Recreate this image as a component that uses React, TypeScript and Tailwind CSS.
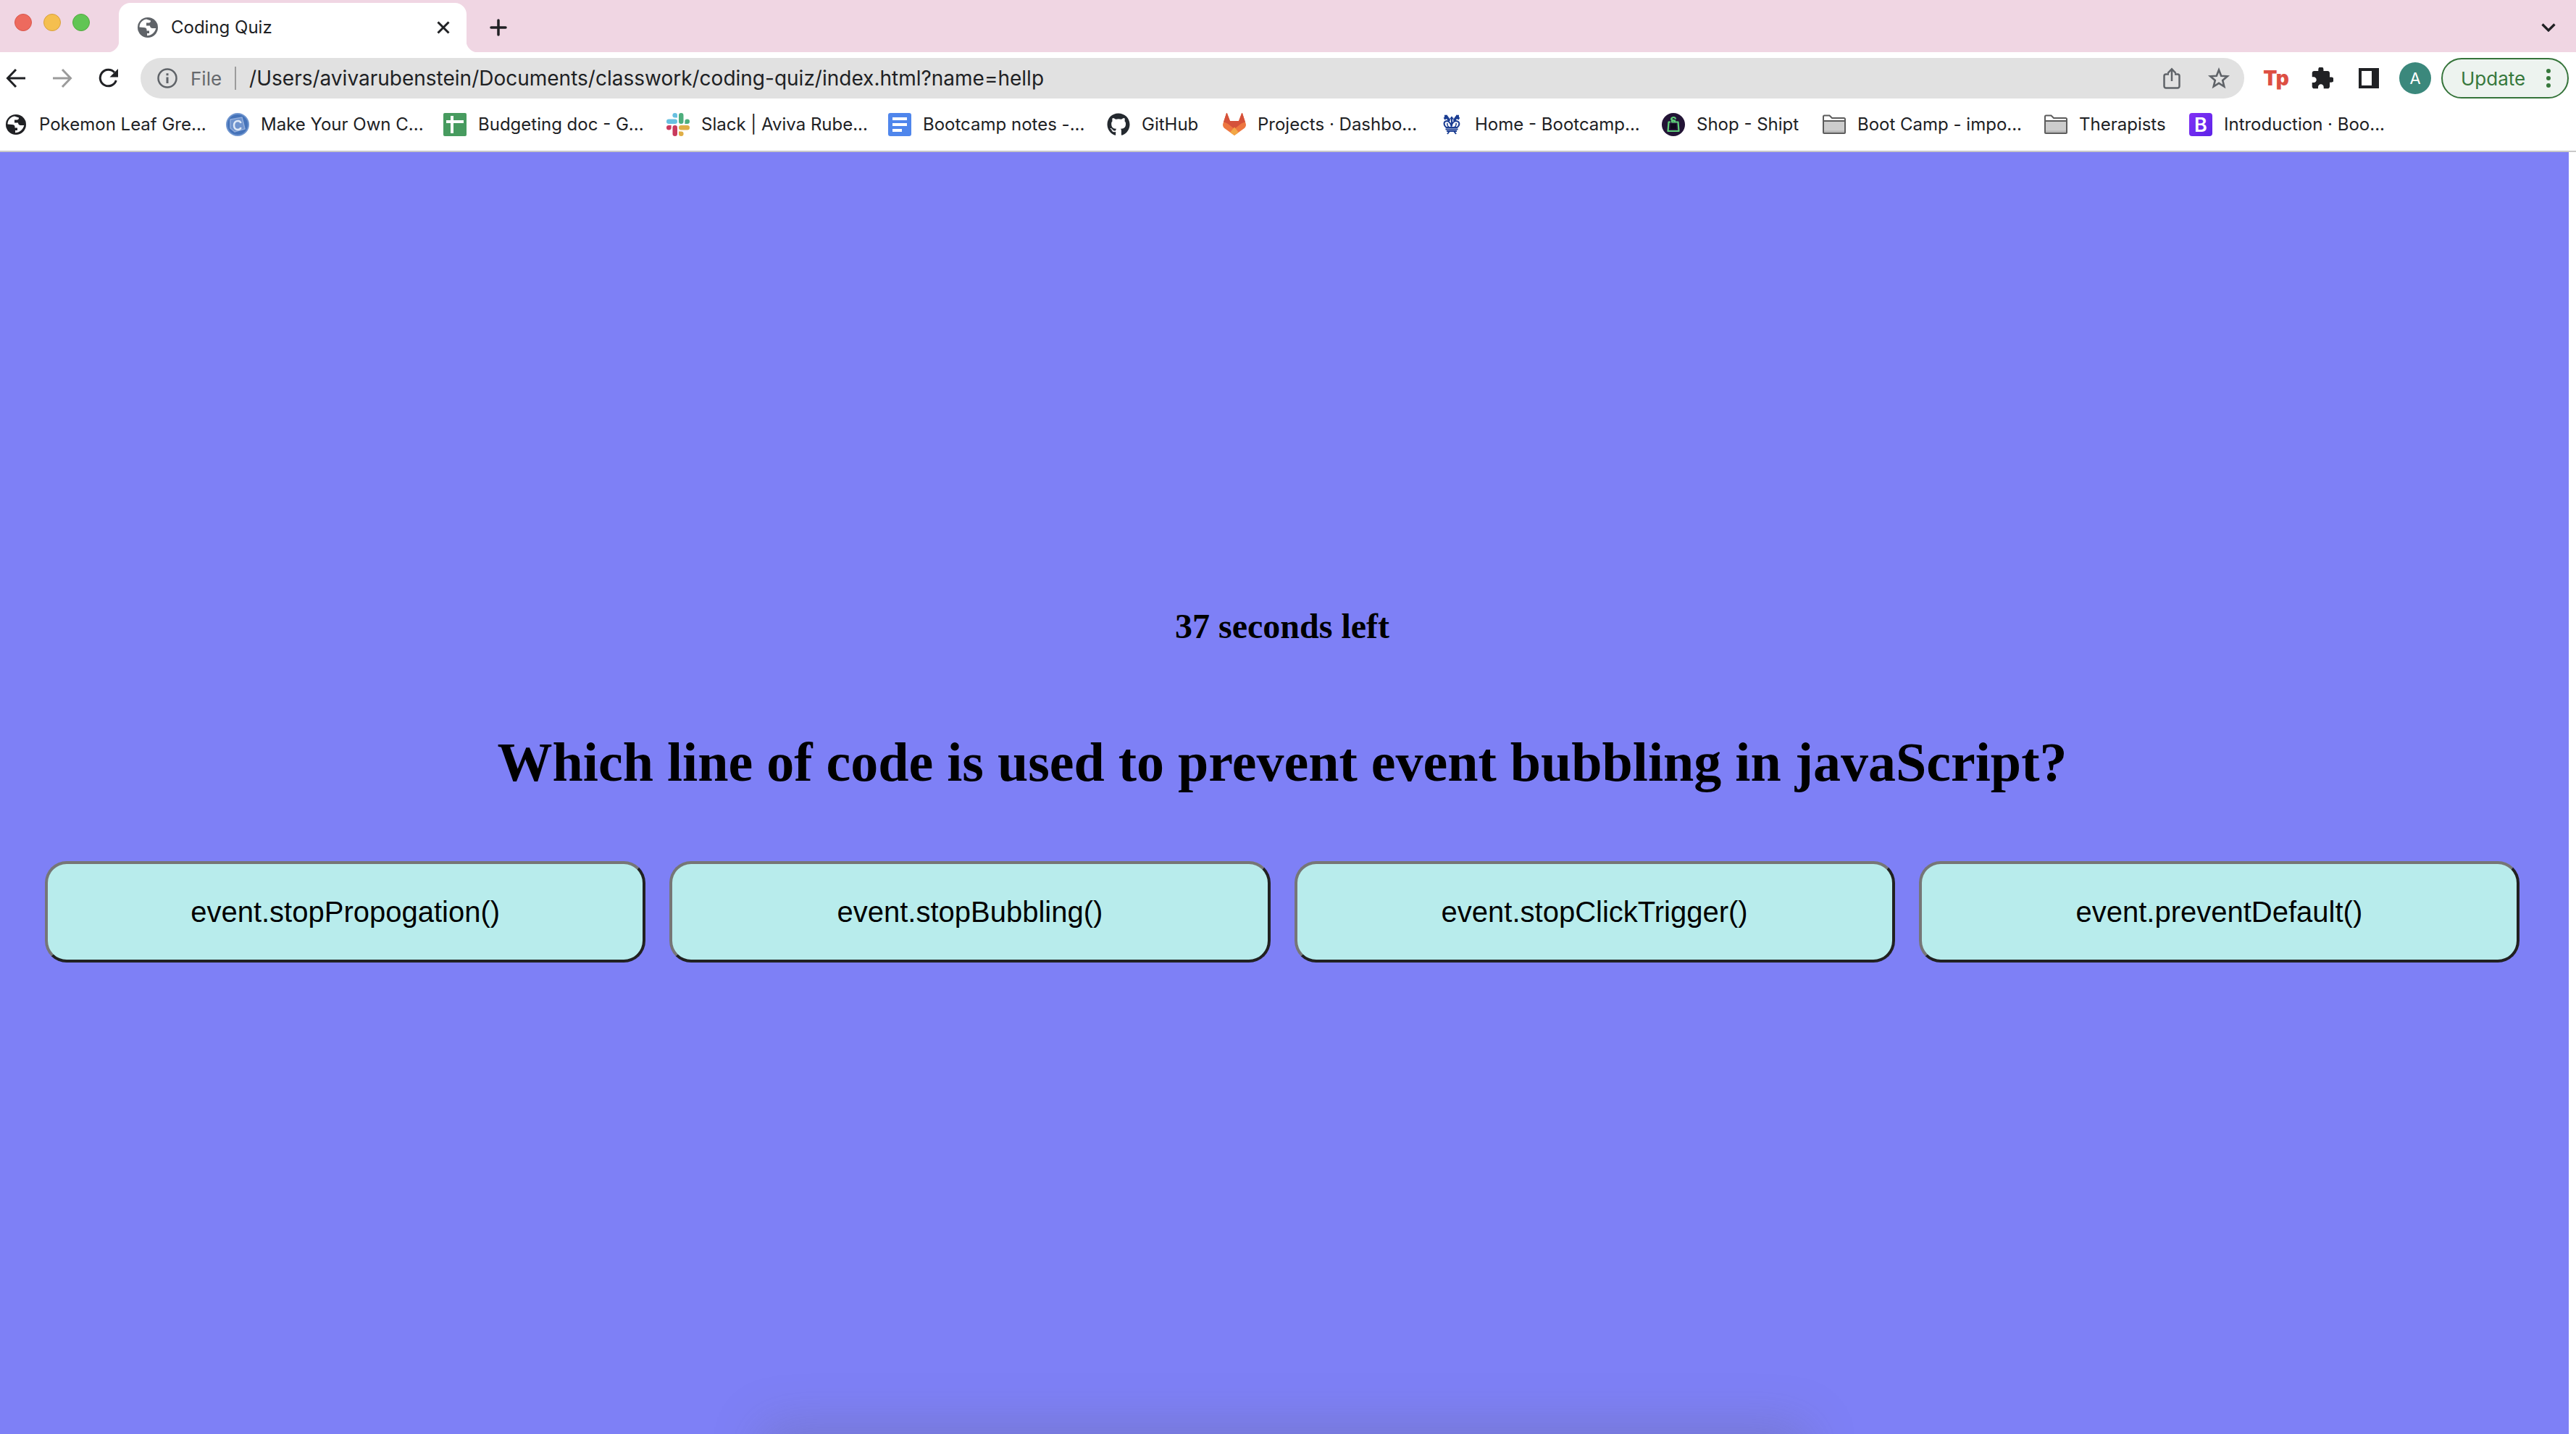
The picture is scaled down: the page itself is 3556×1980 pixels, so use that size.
import React from "react";
import { FaGithub } from "react-icons/fa";

const ui = "font-['Inter','Liberation_Sans',sans-serif]";

function Globe({ className }: { className: string }) {
  return (
    <svg viewBox="0 0 28 28" className={className} aria-hidden="true">
      <circle cx="14" cy="14" r="14" fill="currentColor" />
      <path
        d="M12 2.5C6.500 3.500 2.500 8 2.500 13.500l6 .5c2.500 0 4 1 4 3v1.500h3.500v3.500H13v3.300c6-.2 11-4.500 12.300-10.300h-4.800c-2 0-3.500-1.500-3.500-3.500h-5v-4h3.500c1.500 0 2.500-1 2.500-2.500V4.500z"
        fill="#fff"
      />
    </svg>
  );
}

function Folder() {
  return (
    <svg viewBox="0 0 32 32" className="size-8 shrink-0" aria-hidden="true">
      <path d="M1 27V5a1.500 1.500 0 0 1 1.500-1.500h7L13 7h16.500A1.500 1.500 0 0 1 31 8.500V27a1 1 0 0 1-1 1H2a1 1 0 0 1-1-1z" fill="#fff" stroke="#5c5c5c" strokeWidth="2" />
      <path d="M2 11h28v16H2z" fill="#cdcdcd" />
      <path d="M1 11h30" stroke="#5c5c5c" strokeWidth="2" />
      <path d="M2 25.500h28" stroke="#b5b5b5" strokeWidth="2" />
    </svg>
  );
}

function Coin() {
  return (
    <svg viewBox="0 0 32 32" className="size-8 shrink-0" aria-hidden="true">
      <circle cx="16" cy="16" r="15" fill="#4573b9" stroke="#6f95cf" strokeWidth="2" />
      <path d="M6 9l16-3 4 16-14 4-6-5z" fill="#6f93cd" stroke="#93aedb" strokeWidth="1.500" />
      <path d="M20.500 14c-.5-2-2-3-4-3-3.300 0-5.500 2.500-5.500 6s2 6 5.300 6c2.200 0 3.700-1 4.200-3" fill="none" stroke="#dfe9f7" strokeWidth="2.500" />
    </svg>
  );
}

function Sheets() {
  return (
    <svg viewBox="0 0 32 32" className="size-8 shrink-0" aria-hidden="true">
      <rect width="32" height="32" rx="2" fill="#479b5f" />
      <path d="M10 4h4v6h14v4H14v14h-4V14H4v-4h6z" fill="#fff" />
    </svg>
  );
}

function Slack() {
  return (
    <svg viewBox="0 0 32 32" className="size-8 shrink-0" aria-hidden="true">
      <g fill="#67c0e0"><path d="M11.700 0a3.300 3.300 0 0 0 0 6.600H15V3.300A3.300 3.300 0 0 0 11.700 0z" /><rect y="8.500" width="15" height="6.500" rx="3.200" /></g>
      <g fill="#4dae7c"><rect x="17" width="6.500" height="15" rx="3.200" /><path d="M32 11.700a3.300 3.300 0 0 0-6.600 0V15h3.300a3.300 3.300 0 0 0 3.300-3.300z" /></g>
      <g fill="#dfae45"><rect x="17" y="17" width="15" height="6.500" rx="3.200" /><path d="M20.300 32a3.300 3.300 0 0 0 0-6.600H17v3.300a3.300 3.300 0 0 0 3.300 3.300z" /></g>
      <g fill="#c93a5d"><rect x="8.500" y="17" width="6.500" height="15" rx="3.200" /><path d="M0 20.300a3.300 3.300 0 0 0 6.600 0V17H3.300A3.300 3.300 0 0 0 0 20.300z" /></g>
    </svg>
  );
}

function Docs() {
  return (
    <svg viewBox="0 0 32 32" className="size-8 shrink-0" aria-hidden="true">
      <rect width="32" height="32" rx="3" fill="#4f86ec" />
      <path d="M6 6h20v4H6zM6 14h20v4H6zM6 22h13v4H6z" fill="#fff" />
    </svg>
  );
}

function Gitlab() {
  return (
    <svg viewBox="0 0 32 32" className="size-8 shrink-0" aria-hidden="true">
      <path d="M6 .5 10 11h12L26 .5c.3-.6.900-.6 1.100 0L31.500 14c1 3 .3 5.500-2 7.200L16 31 2.500 21.200C.2 19.500-.5 17 .5 14L4.900.5c.2-.6.800-.6 1.100 0z" fill="#ed7640" />
      <path d="M6 .5 10 11h12L26 .5c.3-.6.900-.6 1.100 0L31 12.500c-2.800.5-4.800 1.500-6.800 3L16 22l-8.200-6.500c-2-1.500-4-2.500-6.800-3L4.900.5c.2-.6.800-.6 1.100 0z" fill="#d5513a" />
      <path d="m16 19.500 5.800 7.300L16 31l-5.800-4.200z" fill="#f2a746" />
    </svg>
  );
}

function Crown() {
  return (
    <svg viewBox="0 0 32 32" className="size-8 shrink-0" fill="none" stroke="#1b3d92" aria-hidden="true">
      <path d="M8.500 20C4 16 5 11.500 9 11c3 0 5 2 6.500 7C17 13 19 11 22 11c5 .5 6 5 1.500 9z" strokeWidth="2" />
      <path d="M12 19.500c-2-2-2.500-4-2-5.500M20 19.500c2-2 2.500-4 2-5.500" strokeWidth="1.500" />
      <path d="M6 4.500h4M5.500 8l3-1.500M9 5l4 6M26 4.500h-4M26.500 8l-3-1.500M23 5l-4 6" strokeWidth="3.500" />
      <path d="M16 5v13M13.500 7.500h5" strokeWidth="2" />
      <path d="M7.500 22.500h17M9 25h14M13 25l-3 4M19 25l3 4" strokeWidth="2" />
    </svg>
  );
}

function Shipt() {
  return (
    <svg viewBox="0 0 32 32" className="size-8 shrink-0" fill="none" aria-hidden="true">
      <circle cx="16" cy="16" r="16" fill="#231436" />
      <path d="M12 12.500H9.500L8.500 25h15L22.500 12.500H14v-3l5 1.500" stroke="#5fd07a" strokeWidth="2.200" strokeLinejoin="round" />
      <path d="M13 9.500C13 5 19 5 19 8.500" stroke="#5fd07a" strokeWidth="2.200" />
      <path d="M12 15h8v7h-8z" fill="#0f0a1c" />
    </svg>
  );
}

function Bootstrap() {
  return (
    <span className="flex size-8 shrink-0 items-center justify-center rounded-sm bg-linear-to-br from-[#8230f5] to-[#5c22e8] text-[27px] leading-none font-semibold text-white">B</span>
  );
}

const bookmarks: { label: string; icon: React.ReactNode; width: string }[] = [
  { label: "Pokemon Leaf Gre...", icon: <Globe className="mx-0.5 size-7 shrink-0 text-[#202124]" />, width: "w-[306px]" },
  { label: "Make Your Own C...", icon: <Coin />, width: "w-[300px]" },
  { label: "Budgeting doc - G...", icon: <Sheets />, width: "w-[308px]" },
  { label: "Slack | Aviva Rube...", icon: <Slack />, width: "w-[306px]" },
  { label: "Bootcamp notes -...", icon: <Docs />, width: "w-[302px]" },
  { label: "GitHub", icon: <FaGithub className="size-8 shrink-0 text-[#24292f]" />, width: "w-[160px]" },
  { label: "Projects · Dashbo...", icon: <Gitlab />, width: "w-[300px]" },
  { label: "Home - Bootcamp...", icon: <Crown />, width: "w-[306px]" },
  { label: "Shop - Shipt", icon: <Shipt />, width: "w-[222px]" },
  { label: "Boot Camp - impo...", icon: <Folder />, width: "w-[306px]" },
  { label: "Therapists", icon: <Folder />, width: "w-[200px]" },
  { label: "Introduction · Boo...", icon: <Bootstrap />, width: "w-[300px]" },
];

const answers = [
  "event.stopPropogation()",
  "event.stopBubbling()",
  "event.stopClickTrigger()",
  "event.preventDefault()",
];

function TabStrip() {
  return (
    <div className="flex h-[72px] bg-[#f0d6e3]">
      <div className="flex h-[62px] w-[164px] shrink-0 items-center gap-4 pl-5">
        <button aria-label="Close window" className="size-6 rounded-full border border-[#d9574c] bg-[#ed6a5e]" />
        <button aria-label="Minimize window" className="size-6 rounded-full border border-[#d8a03d] bg-[#f5bf4f]" />
        <button aria-label="Zoom window" className="size-6 rounded-full border border-[#53a940] bg-[#61c554]" />
      </div>
      <div className="relative mt-1 flex h-[68px] w-[480px] items-center rounded-t-2xl bg-white pr-[22px] pl-[26px]">
        <span className="absolute bottom-0 -left-4 size-4 bg-[radial-gradient(circle_at_0_0,#f0d6e3_16px,#fff_17px)]" />
        <span className="absolute -right-4 bottom-0 size-4 bg-[radial-gradient(circle_at_100%_0,#f0d6e3_16px,#fff_17px)]" />
        <Globe className="size-7 text-[#5f6368]" />
        <span className="ml-[18px] flex-1 text-2xl text-[#202124]">Coding Quiz</span>
        <button aria-label="Close tab">
          <svg viewBox="0 0 20 20" className="size-5" stroke="#202124" strokeWidth="3"><path d="M2.500 2.500l15 15M17.500 2.500l-15 15" /></svg>
        </button>
      </div>
      <button aria-label="New tab" className="mt-1 ml-8">
        <svg viewBox="0 0 24 24" className="size-6" stroke="#202124" strokeWidth="3.500" strokeLinecap="round"><path d="M12 2v20M2 12h20" /></svg>
      </button>
      <button aria-label="Search tabs" className="mt-1 mr-7 ml-auto">
        <svg viewBox="0 0 20 12" className="h-3 w-5" fill="none" stroke="#202124" strokeWidth="3.200"><path d="M1.500 1.500L10 10l8.500-8.500" /></svg>
      </button>
    </div>
  );
}

function Toolbar() {
  return (
    <div className="flex h-[72px] items-center bg-white pr-[10px] pl-2">
      <button aria-label="Back">
        <svg viewBox="0 0 28 28" className="size-7" fill="none" stroke="#202124" strokeWidth="3"><path d="M27 14H3M14 2L2.500 14 14 26" /></svg>
      </button>
      <button aria-label="Forward" className="ml-9">
        <svg viewBox="0 0 28 28" className="size-7" fill="none" stroke="#9b9b9b" strokeWidth="3"><path d="M1 14h24M14 2l11.500 12L14 26" /></svg>
      </button>
      <button aria-label="Reload" className="ml-9">
        <svg viewBox="0 0 28 28" className="size-7" fill="none"><path d="M24.300 17A11.300 11.300 0 1 1 22 6" stroke="#202124" strokeWidth="3" /><path d="M27 1v11.500H15.500z" fill="#202124" /></svg>
      </button>
      <div className="ml-[30px] flex h-14 flex-1 items-center rounded-full bg-[#e1e1e1] pr-5 pl-[23px]">
        <svg viewBox="0 0 28 28" className="size-7 shrink-0" fill="none" stroke="#5f6368" aria-hidden="true"><circle cx="14" cy="14" r="12.500" strokeWidth="2.500" /><path d="M14 12.500V21M14 7.200v3" strokeWidth="3" /></svg>
        <span className="ml-[18px] text-[26px] text-[#66696d]">File</span>
        <span className="mx-[18px] h-8 w-[2px] bg-[#9c9c9c]" />
        <input aria-label="Address" className="min-w-0 flex-1 bg-transparent text-[28px] text-[#202124] outline-none" defaultValue="/Users/avivarubenstein/Documents/classwork/coding-quiz/index.html?name=hellp" />
        <button aria-label="Share">
          <svg viewBox="0 0 24 30" className="h-[30px] w-6" fill="none" stroke="#5f6368" strokeWidth="2.500"><path d="M8 9.500H4A2.500 2.500 0 0 0 1.500 12v14A2.500 2.500 0 0 0 4 28.500h16a2.500 2.500 0 0 0 2.500-2.500V12A2.500 2.500 0 0 0 20 9.500h-4M12 19V2.500M6.500 8L12 2.300 17.500 8" /></svg>
        </button>
        <button aria-label="Bookmark this page" className="ml-[38px]">
          <svg viewBox="0 0 30 30" className="size-[30px]" fill="none" stroke="#5f6368" strokeWidth="2.600"><path d="M15 3.500l3.200 8.200 8.600.6-6.600 5.600 2.100 8.600L15 21.800l-7.300 4.700 2.100-8.600-6.600-5.600 8.600-.6z" /></svg>
        </button>
      </div>
      <button aria-label="Extension Tp" className="ml-7 flex w-8 justify-center text-[28px] leading-none font-black text-[#dd4f43]">
        Tp
      </button>
      <button aria-label="Extensions" className="ml-[33px]">
        <svg viewBox="1.500 1.500 21 21" className="size-[30px]" fill="#202124"><path d="M20.500 11H19V7c0-1.100-.9-2-2-2h-4V3.500a2.500 2.500 0 0 0-5 0V5H4c-1.100 0-1.990.9-1.990 2v3.800H3.500c1.490 0 2.700 1.210 2.700 2.700s-1.210 2.700-2.700 2.700H2V20c0 1.100.9 2 2 2h3.800v-1.500c0-1.490 1.210-2.700 2.700-2.700s2.700 1.210 2.700 2.700V22H17c1.100 0 2-.9 2-2v-4h1.500a2.500 2.500 0 0 0 0-5z" /></svg>
      </button>
      <button aria-label="Side panel" className="ml-[35px]">
        <svg viewBox="0 0 28 28" className="size-7" fill="#202124"><path fillRule="evenodd" d="M0 0h28v28H0zM4 4v20h14V4z" /></svg>
      </button>
      <button aria-label="Profile" className="ml-7 flex size-11 items-center justify-center rounded-full bg-[#3b887c] text-[22px] text-white">A</button>
      <button className="ml-[14px] flex h-14 w-44 items-center rounded-full border-2 border-[#35743a] bg-[#edf3ef] pl-[25px] text-[26px] text-[#37783c]">
        Update
        <span className="ml-auto flex flex-col gap-1 pr-[23px]">
          <span className="size-1.5 rounded-full bg-[#37783c]" />
          <span className="size-1.5 rounded-full bg-[#37783c]" />
          <span className="size-1.5 rounded-full bg-[#37783c]" />
        </span>
      </button>
    </div>
  );
}

function Bookmarks() {
  return (
    <nav aria-label="Bookmarks" className="flex h-[66px] items-center border-b-2 border-[#c9c9c9] bg-white pb-2 pl-1.5">
      {bookmarks.map((b) => (
        <a key={b.label} href="#" className={"flex shrink-0 items-center gap-4 text-2xl whitespace-nowrap text-[#202124] " + b.width}>
          {b.icon}
          {b.label}
        </a>
      ))}
    </nav>
  );
}

export default function App() {
  return (
    <div className={"flex min-h-screen flex-col bg-white " + ui}>
      <header>
        <TabStrip />
        <Toolbar />
        <Bookmarks />
      </header>
      <main className="relative mr-[10px] flex flex-1 flex-col overflow-hidden bg-[#7e80f6] pt-[626px] pr-[68px] pl-[62px] text-black">
        <h3 className="text-center font-['Liberation_Serif',serif] text-5xl leading-[58px] font-bold">37 seconds left</h3>
        <h1 className="mt-[112px] text-center font-['Liberation_Serif',serif] text-[76px] leading-[92px] font-bold">Which line of code is used to prevent event bubbling in javaScript?</h1>
        <div className="mt-[91px] grid grid-cols-4 gap-[33px]">
          {answers.map((a) => (
            <button key={a} className="h-[140px] rounded-[30px] border-4 border-t-[#767676] border-r-[#212121] border-b-[#212121] border-l-[#767676] bg-[#b8ecec] font-['Liberation_Sans',sans-serif] text-[40px]">
              {a}
            </button>
          ))}
        </div>
        <div className="pointer-events-none absolute inset-x-[30%] top-full h-24 shadow-[0_0_70px_10px_rgba(90,90,90,0.25)]" />
      </main>
    </div>
  );
}
